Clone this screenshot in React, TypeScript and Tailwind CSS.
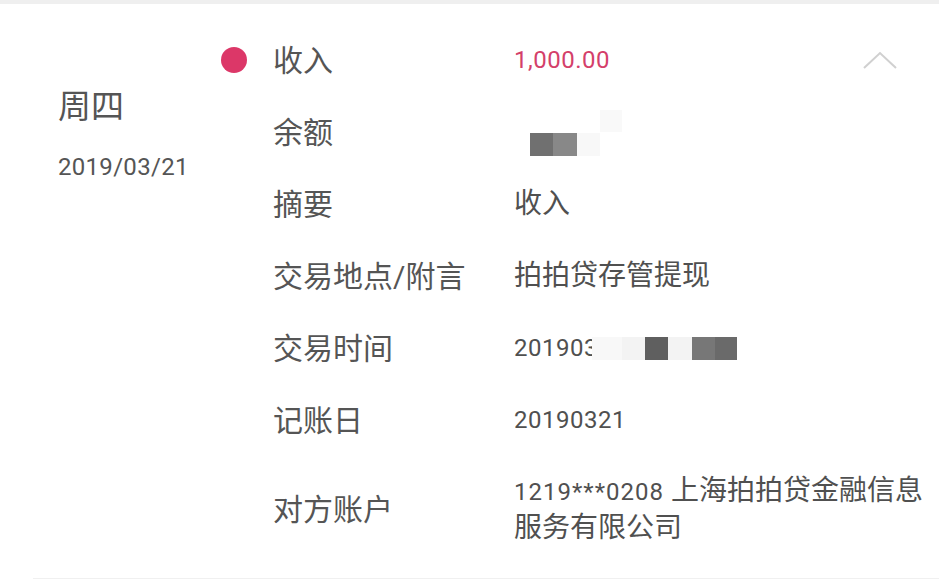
import { ReactNode } from "react";

const font = { fontFamily: 'Roboto, "Noto Sans CJK SC", sans-serif' };

const Row = ({ label, children, dot }: { label: string; children: ReactNode; dot?: boolean }) => (
  <div className="flex h-[72px] items-center">
    <div className="flex w-[52px] items-center">
      {dot && <span className="block h-[26px] w-[26px] rounded-full bg-[#dc3768]" />}
    </div>
    <div className="w-[241px] text-[30px] text-[#555555]">{label}</div>
    <div className="flex-1 text-[#505050]">{children}</div>
  </div>
);

const App = () => {
  return (
    <div className="h-[580px] w-[939px] overflow-hidden bg-white" style={font}>
      <div className="h-[4px] bg-[#efefef]" />
      <div className="flex pt-[20px]">
        <div className="w-[221px] pl-[58px] pt-[63px]">
          <div className="text-[33px] leading-[40px] text-[#555]">周四</div>
          <div className="mt-[25px] text-[24px] leading-[30px] tracking-[0.3px] text-[#555]">2019/03/21</div>
        </div>
        <div className="flex-1">
          <Row label="收入" dot>
            <div className="flex items-center justify-between pr-[42px]">
              <span className="text-[24px] tracking-[0.5px] text-[#d43f6a]">1,000.00</span>
              <svg width="34" height="20" viewBox="0 0 34 20" fill="none">
                <path d="M1 18 L17 3 L33 18" stroke="#d0d0d0" strokeWidth="2" />
              </svg>
            </div>
          </Row>
          <Row label="余额">
            <div className="relative h-[72px]">
              <div className="absolute left-[16px] top-[37px] flex h-[23px]">
                <span className="w-[23px] bg-[#707070]" />
                <span className="w-[24px] bg-[#888888]" />
                <span className="w-[23px] bg-[#f8f8f8]" />
              </div>
              <span className="absolute left-[86px] top-[14px] h-[22px] w-[22px] bg-[#f9f9f9]" />
            </div>
          </Row>
          <Row label="摘要">
            <span className="text-[28px]">收入</span>
          </Row>
          <Row label="交易地点/附言">
            <span className="text-[28px]">拍拍贷存管提现</span>
          </Row>
          <Row label="交易时间">
            <div className="flex items-center">
              <span className="text-[24px] tracking-[0.5px]">201903</span>
              <div className="relative -ml-[6px] flex h-[23px]">
                <span className="w-[30px] bg-[#f8f8f8]" />
                <span className="w-[23px] bg-[#f3f3f3]" />
                <span className="w-[23px] bg-[#5f5f5f]" />
                <span className="w-[24px] bg-[#f3f3f3]" />
                <span className="w-[23px] bg-[#777777]" />
                <span className="w-[22px] bg-[#6a6a6a]" />
              </div>
            </div>
          </Row>
          <Row label="记账日">
            <span className="text-[24px] tracking-[0.5px]">20190321</span>
          </Row>
          <div className="flex items-center pb-[33px] pt-[17px]">
            <div className="w-[52px]" />
            <div className="w-[241px] text-[30px] text-[#555555]">对方账户</div>
            <div className="flex-1 text-[28px] leading-[35px] text-[#505050]">
              <span className="text-[24px] tracking-[1px]">1219***0208 </span>上海拍拍贷金融信息
              <br />
              服务有限公司
            </div>
          </div>
        </div>
      </div>
      <div className="ml-[33px] h-px bg-[#f0f0f0]" />
    </div>
  );
};

export default App;
